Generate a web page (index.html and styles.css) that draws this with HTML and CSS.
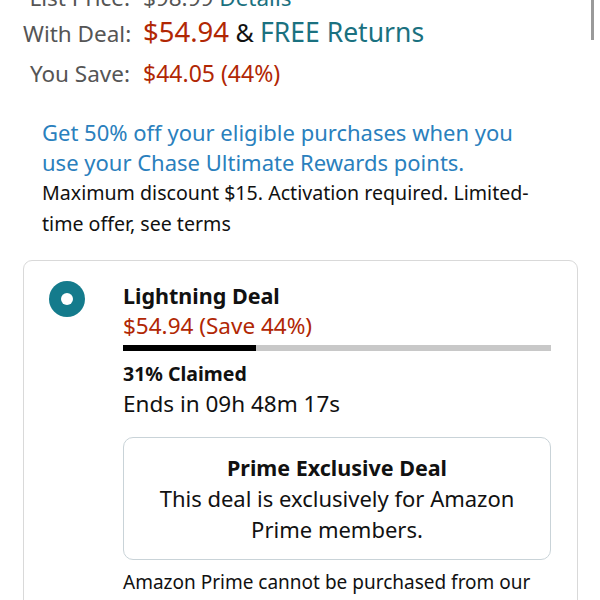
FILE: index.html
```html
<!DOCTYPE html>
<html>
<head>
<meta charset="utf-8">
<link rel="stylesheet" href="styles.css">
</head>
<body>
<div class="page">
  <div class="prices">
    <div class="label lp">List Price:</div>
    <div class="val lp"><span class="strike">$98.99</span> <span class="teal">Details</span></div>
    <div class="label">With Deal:</div>
    <div class="val"><span class="price">$54.94</span> <span class="amp">&amp;</span> <span class="teal free">FREE Returns</span></div>
    <div class="label">You Save:</div>
    <div class="val"><span class="red save">$44.05 (44%)</span></div>
  </div>
  <div class="promo">
    <div class="promo-title">Get 50% off your eligible purchases when you use your Chase Ultimate Rewards points.</div>
    <div class="promo-text">Maximum discount $15. Activation required. Limited-time offer, see terms</div>
  </div>
  <div class="card">
    <div class="radio"><span class="dot"></span></div>
    <div class="deal">
      <div class="deal-title">Lightning Deal</div>
      <div class="deal-price">$54.94 (Save 44%)</div>
      <div class="bar"><div class="fill" style="width:31%"></div></div>
      <div class="claimed">31% Claimed</div>
      <div class="ends">Ends in 09h 48m 17s</div>
      <div class="prime-box">
        <div class="prime-title">Prime Exclusive Deal</div>
        <div class="prime-text">This deal is exclusively for Amazon Prime members.</div>
      </div>
      <div class="note">Amazon Prime cannot be purchased from our app. You can purchase it on our website.</div>
    </div>
  </div>
</div>
<div class="scrollbar"></div>
</body>
</html>
```
FILE: styles.css
```css
html, body { margin: 0; padding: 0; background: #fff; }
body { font-family: "Noto Sans", "Liberation Sans", sans-serif; color: #111; overflow: hidden; height: 600px; }
.page { padding: 0 22px 0 23px; margin-top: -17px; }
.prices { display: grid; grid-template-columns: 107px auto; column-gap: 13px; align-items: baseline; }
.label { text-align: right; font-size: 22.5px; color: #555; line-height: 39px; white-space: nowrap; }
.val { font-size: 24.5px; line-height: 39px; color: #111; white-space: nowrap; }
.label.lp, .val.lp { font-size: 22.5px; line-height: 29px; }
.price { color: #b12704; font-size: 27.5px; }
.amp { font-size: 25px; }
.free { font-size: 26.5px; }
.save { font-size: 23px; }
.red { color: #b12704; }
.teal { color: #1a7180; }
.strike { color: #555; text-decoration: line-through; }
.promo { padding: 24px 30px 0 19px; }
.promo-title { color: #2a80bd; font-size: 22px; line-height: 30px; }
.promo-text { font-size: 19.6px; line-height: 31px; color: #111; }
.card { margin-top: 21px; border: 1px solid #d9d9d9; border-radius: 9px; display: flex; padding: 20px 26px 0 25px; height: 400px; }
.radio { width: 36px; height: 36px; border-radius: 50%; background: #147b8c; display: flex; align-items: center; justify-content: center; flex: none; }
.dot { width: 12px; height: 12px; border-radius: 50%; background: #fff; }
.deal { margin-left: 38px; flex: 1; }
.deal-title { font-weight: bold; font-size: 21.5px; line-height: 30px; }
.deal-price { color: #b12704; font-size: 22.5px; line-height: 30px; }
.bar { height: 6px; background: #c8c8c8; margin-top: 4px; }
.fill { height: 100%; background: #000; }
.claimed { font-weight: bold; font-size: 19.5px; line-height: 30px; margin-top: 8px; }
.ends { font-size: 22.5px; line-height: 30px; }
.prime-box { margin-top: 18px; border: 1px solid #c9d3d8; border-radius: 10px; padding: 15px 16px 14px; text-align: center; }
.prime-title { font-weight: bold; font-size: 21.5px; line-height: 30px; }
.prime-text { font-size: 22px; line-height: 31px; }
.note { font-size: 19px; line-height: 31px; margin-top: 7px; }
.scrollbar { position: absolute; left: 591px; top: 0; width: 3px; height: 40px; background: #9a9a9a; }
```
